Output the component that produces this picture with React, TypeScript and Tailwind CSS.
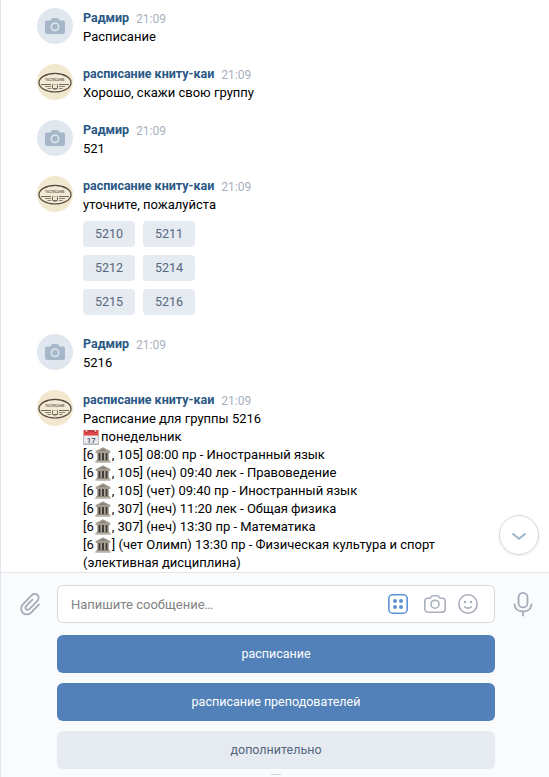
import React from "react";

function UserAvatar() {
  return (
    <div className="flex h-9 w-9 shrink-0 items-center justify-center rounded-full bg-[#e1e7ee]">
      <svg width="20" height="16" viewBox="0 0 20 16" className="block">
        <path
          d="M2 2.6h3.2L6.6.8C7 .3 7.500 0 8 0h4c.5 0 1 .3 1.400.8l1.400 1.800H18c1.100 0 2 .9 2 2V14c0 1.100-.9 2-2 2H2c-1.100 0-2-.9-2-2V4.600c0-1.100.9-2 2-2z"
          fill="#a5b7c9"
        />
        <circle cx="10" cy="8.800" r="3.700" fill="none" stroke="#e1e7ee" strokeWidth="1.500" />
      </svg>
    </div>
  );
}

function BotAvatar() {
  return (
    <svg width="36" height="36" viewBox="0 0 36 36" className="block shrink-0">
      <circle cx="18" cy="18" r="18" fill="#f2e8d0" />
      <ellipse cx="18" cy="18.700" rx="16" ry="9.300" fill="#f3ead6" stroke="#54463c" strokeWidth="1.200" />
      <text x="18" y="17" textAnchor="middle" fontSize="3" fontWeight="700" textLength="19" fill="#7d7163" fontFamily="Roboto, sans-serif">
        РАСПИСАНИЕ
      </text>
      <path d="M4 20.500h10M22 20.500h10" stroke="#75685c" strokeWidth="1.100" />
      <path d="M8 22.500h6M10.500 24.500H14M22 22.500h6M22 24.500h3.500" stroke="#8d8172" strokeWidth="1" />
      <path d="M15.500 20.200v4.300h5v-4.300" fill="#f3ead6" stroke="#75685c" strokeWidth="1" />
      <path d="M15.500 20.500h5" stroke="#b3a797" strokeWidth=".7" />
      <path d="M16.500 25.700h3" stroke="#8d8172" strokeWidth=".8" />
    </svg>
  );
}

function CalendarEmoji() {
  return (
    <svg width="16" height="16" viewBox="0 0 16 16" className="mr-[2px] inline-block align-[-4px]">
      <path d="M.5 1h15v14.500H.5z" fill="#e9ebef" />
      <path d="M.5 1h15v5.500H.5z" fill="#dc4447" />
      <path d="M.5 15.200h15" stroke="#8f959e" strokeWidth="1" />
      <path d="M.6 6v9.500M15.400 6v9.500" stroke="#adb3bb" strokeWidth=".9" />
      <path d="M3.500 1v3M6.500 1v2M9.500 1v2M12.500 1v3" stroke="#9b3539" strokeWidth="1.400" />
      <path d="M3.500 0v2.700M12.500 0v2.700" stroke="#f3e9e9" strokeWidth="1.300" />
      <text x="8.200" y="13.700" textAnchor="middle" fontSize="7.700" fontWeight="500" fill="#4c535d" fontFamily="Roboto, sans-serif">
        17
      </text>
    </svg>
  );
}

function BuildingEmoji() {
  return (
    <svg width="16" height="16" viewBox="0 0 16 16" className="ml-px mr-px inline-block align-[-4px]">
      <path d="M2.200 6h11.600v7H2.200z" fill="#3f3b37" />
      <path d="M8 .2.7 4v2h14.600V4z" fill="#a69e92" />
      <path d="M8 1.500 3.500 4h9z" fill="#8b8379" />
      <path d="M2.800 6v7.300M6.200 6v7.300M9.800 6v7.300M13.200 6v7.300" stroke="#b5aea1" strokeWidth="1.500" />
      <path d="M1.500 13h13v1.300h-13z" fill="#8e877c" />
      <path d="M.3 14.200h15.400v1.500H.3z" fill="#b1a99c" />
    </svg>
  );
}

function Message({ bot = false, children }: { bot?: boolean; children: React.ReactNode }) {
  return (
    <div className="flex gap-[10px]">
      {bot ? <BotAvatar /> : <UserAvatar />}
      <div className="-mb-[2px] min-w-0 flex-1">
        <div className="flex h-5 gap-[7px] leading-[19px]">
          <span className="text-[12.5px] font-bold text-[#2a5885]">{bot ? "расписание книту-каи" : "Радмир"}</span>
          <span className="pt-[2px] text-[12px] text-[#a8b0bd]">21:09</span>
        </div>
        <div className="leading-[18px]">{children}</div>
      </div>
    </div>
  );
}

const groups = ["5210", "5211", "5212", "5214", "5215", "5216"];

const lessons = [
  ", 105] 08:00 пр - Иностранный язык",
  ", 105] (неч) 09:40 лек - Правоведение",
  ", 105] (чет) 09:40 пр - Иностранный язык",
  ", 307] (неч) 11:20 лек - Общая физика",
  ", 307] (неч) 13:30 пр - Математика",
  "] (чет Олимп) 13:30 пр - Физическая культура и спорт",
];

export default function App() {
  return (
    <div className="flex h-[777px] w-[549px] flex-col overflow-hidden border-l border-[#dfe3eb] bg-white font-[Roboto,sans-serif] text-[13px] text-black">
      <main className="relative flex h-[572px] shrink-0 flex-col gap-5 overflow-hidden pl-9 pt-2">
        <Message>Расписание</Message>
        <Message bot>Хорошо, скажи свою группу</Message>
        <Message>521</Message>
        <Message bot>
          уточните, пожалуйста
          <div className="mb-px mt-[7px] grid w-28 grid-cols-2 gap-2">
            {groups.map((g) => (
              <button key={g} className="h-[26px] rounded bg-[#e5ebf1] text-[12.5px] text-[#55677d]">
                {g}
              </button>
            ))}
          </div>
        </Message>
        <Message>5216</Message>
        <Message bot>
          <div>Расписание для группы 5216</div>
          <div className="h-[18px]">
            <CalendarEmoji />
            понедельник
          </div>
          {lessons.map((l) => (
            <div key={l} className="h-[18px]">
              [6
              <BuildingEmoji />
              {l}
            </div>
          ))}
          <div>(элективная дисциплина)</div>
        </Message>
        <button className="absolute left-[498px] top-[515px] flex h-10 w-10 items-center justify-center rounded-full border border-[#d3d9de] bg-white shadow-[0_1px_3px_rgba(0,0,0,0.08)]">
          <svg width="16" height="10" viewBox="0 0 16 10" className="mt-[3px]">
            <path d="m2 2 6 4.800L14 2" fill="none" stroke="#9db4ce" strokeWidth="2" strokeLinecap="round" strokeLinejoin="round" />
          </svg>
        </button>
      </main>
      <footer className="flex flex-1 flex-col border-t border-[#e3e6eb] bg-[#fafbfc] pt-3">
        <div className="flex h-[38px] items-center">
          <div className="w-14 pl-[18px]">
            <svg width="24" height="26" viewBox="0 0 24 26" fill="none" stroke="#a4aab7" strokeWidth="1.800" strokeLinecap="round" className="block">
              <path d="m20 13.400-7.600 8c-2.400 2.500-6.300 2.700-8.600.4s-2.200-6.100.3-8.700l8.300-8.600c1.800-1.900 4.500-2.100 6.100-.5s1.400 4.200-.4 6.100l-7.600 7.900c-1 1.100-2.400 1.200-3.300.3s-.9-2.300.1-3.400l6.100-6.300" />
            </svg>
          </div>
          <div className="flex h-[38px] w-[438px] items-center rounded-md border border-[#d3d9de] bg-white pl-[13px]">
            <span className="flex-1 pt-px text-[#828282]">Напишите сообщение…</span>
            <svg width="20" height="20" viewBox="0 0 20 20" className="mr-4">
              <rect x=".8" y=".8" width="18.400" height="18.400" rx="4" fill="none" stroke="#5c94d2" strokeWidth="1.600" />
              <g fill="#5c94d2">
                <circle cx="7" cy="7" r="2" />
                <circle cx="13" cy="7" r="2" />
                <circle cx="7" cy="13" r="2" />
                <circle cx="13" cy="13" r="2" />
              </g>
            </svg>
            <svg width="22" height="18" viewBox="0 0 22 18" fill="none" stroke="#a9afbc" strokeWidth="1.600" className="mr-3">
              <path d="M4 3.200h1.500c.5 0 .8-.2 1.100-.6l.6-.8c.5-.7 1-1 1.800-1h4c.8 0 1.300.3 1.800 1l.6.8c.3.4.6.6 1.100.6H18c1.800 0 3.200 1.400 3.200 3.200V14c0 1.800-1.400 3.200-3.200 3.200H4C2.200 17.200.8 15.800.8 14V6.400C.8 4.600 2.200 3.200 4 3.200z" />
              <circle cx="11" cy="9.200" r="4" />
            </svg>
            <svg width="20" height="20" viewBox="0 0 20 20" className="mr-4" fill="none" stroke="#a9afbc" strokeWidth="1.600">
              <circle cx="10" cy="10" r="9.200" />
              <circle cx="7" cy="8" r="1.300" fill="#a9afbc" stroke="none" />
              <circle cx="13" cy="8" r="1.300" fill="#a9afbc" stroke="none" />
              <path d="M6.500 12.800c1.800 1.800 5.200 1.800 7 0" strokeLinecap="round" />
            </svg>
          </div>
          <svg width="20" height="26" viewBox="0 0 20 26" className="ml-[18px]" fill="none" stroke="#a4aab7" strokeWidth="1.800" strokeLinecap="round">
            <rect x="5.500" y="1.900" width="9" height="14.500" rx="4.500" />
            <path d="M1.500 13.500c.5 4.500 4 7 8.500 7s8-2.500 8.500-7M10 20.500v4" />
          </svg>
        </div>
        <div className="ml-14 mt-3 flex w-[438px] flex-col gap-[10px] text-[12.5px]">
          <button className="h-[38px] rounded-md bg-[#5181b8] text-white">расписание</button>
          <button className="h-[38px] rounded-md bg-[#5181b8] text-white">расписание преподователей</button>
          <button className="h-[38px] rounded-md bg-[#e5ebf1] text-[#55677d]">дополнительно</button>
        </div>
        <div className="ml-[270px] mt-[5px] h-px w-[10px] bg-[#cdd2d9]" />
      </footer>
    </div>
  );
}
